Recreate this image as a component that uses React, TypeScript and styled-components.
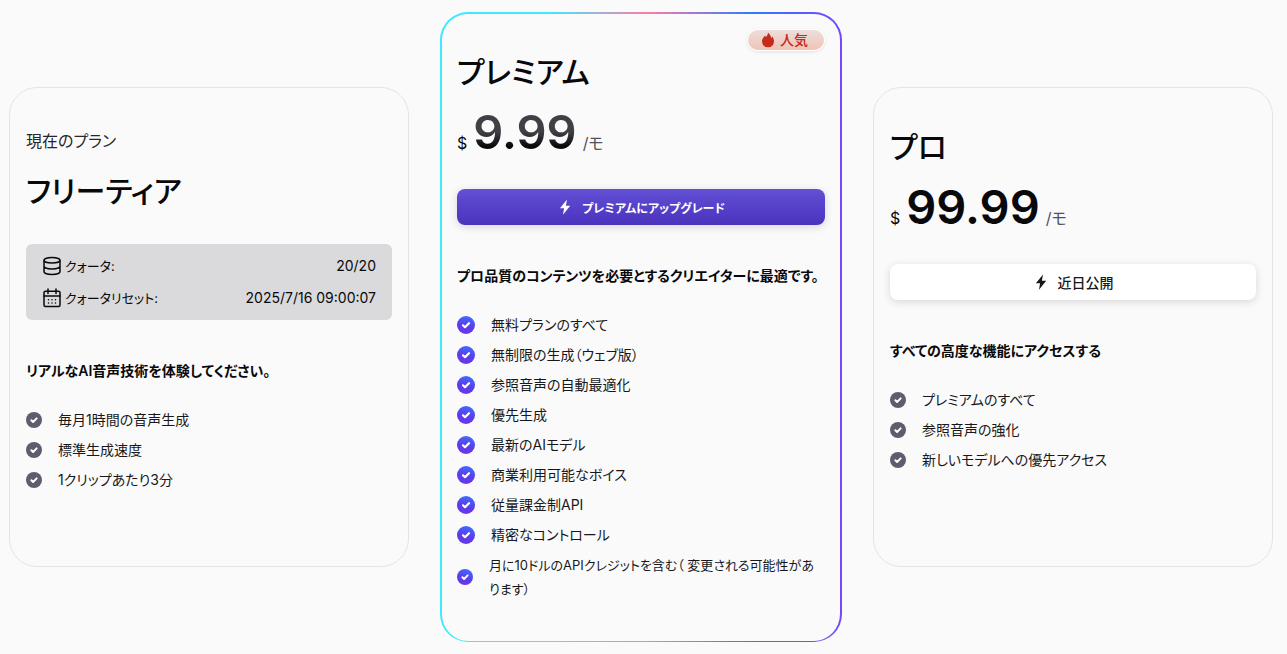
import React from "react";
import styled, { createGlobalStyle, css } from "styled-components";

const GlobalStyle = createGlobalStyle`
  * { box-sizing: border-box; }
  body {
    margin: 0;
    background: #fafafa;
    color: #09090b;
    font-family: Inter, "Noto Sans CJK JP", sans-serif;
    font-size: 14px;
    font-feature-settings: "palt";
  }
  h2, p, ul, dl, dd { margin: 0; padding: 0; }
`;

const Plans = styled.main`
  display: grid;
  grid-template-columns: repeat(auto-fit, minmax(360px, 1fr));
  align-items: center;
  gap: 32px;
  padding: 12px 14px 12px 9px;
`;

const Card = styled.section<{ $featured?: boolean }>`
  position: relative;
  display: flex;
  flex-direction: column;
  min-height: 480px;
  padding: 39px 16px;
  border: 1px solid #e4e4e7;
  border-radius: 28px;
  ${(p) =>
    p.$featured &&
    css`
      margin: 0 -1px;
      padding: 38px 15px 40px;
      border: solid transparent;
      border-width: 2px 2px 1px;
      background:
        linear-gradient(#fafafa, #fafafa) padding-box,
        linear-gradient(90deg, #40e8ff 27%, #ff7aa8 52%, #2f7bff 77%, #7647ff 100%) border-box;
    `}
`;

const Current = styled.p`
  margin-bottom: 16px;
  font-size: 16px;
  line-height: 28px;
  color: #27272a;
`;

const Title = styled.h2`
  font-size: 30px;
  line-height: 40px;
  font-weight: 500;
`;

const Price = styled.p`
  display: flex;
  align-items: baseline;
  gap: 6px;
  margin-top: 16px;
  font-size: 16px;
  line-height: 24px;
`;

const Amount = styled.span<{ $shaded?: boolean }>`
  font-size: 47px;
  line-height: 48px;
  font-weight: 600;
  ${(p) =>
    p.$shaded &&
    css`
      background: linear-gradient(#3f3f46 50%, #09090b 80%);
      background-clip: text;
      color: transparent;
    `}
`;

const Period = styled.span`
  color: #52525b;
`;

const Action = styled.button<{ $primary?: boolean }>`
  display: flex;
  align-items: center;
  justify-content: center;
  gap: 9px;
  height: 36px;
  margin-top: 33px;
  border: 0;
  border-radius: 8px;
  font: inherit;
  font-size: ${(p) => (p.$primary ? 12 : 14)}px;
  font-weight: ${(p) => (p.$primary ? 600 : 500)};
  font-feature-settings: inherit;
  color: ${(p) => (p.$primary ? "#fff" : "#18181b")};
  background: ${(p) => (p.$primary ? "linear-gradient(#6250d6, #4a32bd)" : "#fff")};
  box-shadow: 0 2px 8px rgba(0, 0, 0, 0.14);
`;

const Badge = styled.span`
  position: absolute;
  top: 16px;
  right: 16px;
  display: flex;
  align-items: center;
  gap: 5px;
  height: 20px;
  padding: 0 16px 0 13px;
  border-radius: 10px;
  font-weight: 500;
  line-height: 18px;
  color: #c62a1c;
  background: linear-gradient(#ebdfdc, #f1c3b5);
  box-shadow: 0 0 0 1px #fff, 0 1px 4px rgba(0, 0, 0, 0.16);
`;

const Usage = styled.dl`
  display: grid;
  gap: 8px;
  margin-top: 33px;
  padding: 10px 16px;
  border-radius: 6px;
  background: #dadadc;
`;

const UsageRow = styled.div`
  display: flex;
  align-items: center;
  justify-content: space-between;
  line-height: 24px;
`;

const UsageLabel = styled.dt`
  display: flex;
  align-items: center;
  gap: 3px;
  font-size: 13px;
`;

const Summary = styled.p`
  margin-top: 39px;
  font-size: 14px;
  line-height: 24px;
  font-weight: 600;
`;

const Features = styled.ul`
  display: grid;
  gap: 6px;
  margin-top: 25px;
  list-style: none;
`;

const Feature = styled.li<{ $long?: boolean }>`
  display: flex;
  align-items: center;
  gap: 16px;
  padding-right: 6px;
  font-size: ${(p) => (p.$long ? 13 : 14)}px;
  line-height: 24px;
  color: #18181b;

  svg { flex: none; }
`;

const Check = ({ bright, size }: { bright?: boolean; size: number }) => (
  <svg width={size} height={size} viewBox="0 0 18 18" aria-hidden="true">
    <defs>
      <linearGradient id="tick" x1="0.7" y1="0" x2="0.4" y2="1">
        <stop stopColor="#3f6dff" />
        <stop offset="0.6" stopColor="#5b3be8" />
        <stop offset="1" stopColor="#6a38ee" />
      </linearGradient>
    </defs>
    <circle cx="9" cy="9" r="9" fill={bright ? "url(#tick)" : "#5f5d6d"} />
    <path d="M6 9.300 8 11.200 12 7.200" fill="none" stroke="#fff" strokeWidth="2.200" strokeLinecap="round" strokeLinejoin="round" />
  </svg>
);

const Bolt = () => (
  <svg width="16" height="16" viewBox="0 0 16 16" fill="currentColor" aria-hidden="true">
    <path d="M10 .5 2.900 9.200h4.200L6 15.800 13.200 6.800H8.900z" />
  </svg>
);

const Flame = () => (
  <svg width="14" height="16" viewBox="0 0 14 16" fill="currentColor" aria-hidden="true">
    <path d="M6.900.6c.2 2-1 3.400-1.900 4.600-.4-.5-.6-1-.7-1.600C2.400 5.200 1 7.200 1 9.600A6 5.700 0 0 0 13 9.600c0-2-.7-3.800-1.800-5.400-.1.800-.4 1.500-1 2C9.900 4 8.600 2 6.900.6z" />
  </svg>
);

const Database = () => (
  <svg width="20" height="20" viewBox="0 0 20 20" fill="none" stroke="currentColor" strokeWidth="1.500" aria-hidden="true">
    <ellipse cx="10" cy="4.300" rx="8" ry="2.800" />
    <path d="M2 4.300v11.200c0 1.700 3.600 3 8 3s8-1.300 8-3V4.300M2 10c0 1.700 3.600 3 8 3s8-1.300 8-3" />
  </svg>
);

const Calendar = () => (
  <svg width="20" height="20" viewBox="0 0 20 20" fill="none" stroke="currentColor" strokeWidth="1.500" strokeLinecap="round" aria-hidden="true">
    <rect x="2" y="3.200" width="16" height="15.300" rx="1.500" />
    <path d="M2 8h16M6 1v4.500M14 1v4.500" />
    <path d="M6.500 11.800h.01M10 11.800h.01M13.500 11.800h.01M6.500 15h.01M10 15h.01M13.500 15h.01" />
  </svg>
);

const FeatureList = ({ items, bright }: { items: string[]; bright?: boolean }) => (
  <Features>
    {items.map((item) => {
      const long = item.length > 24;
      return (
        <Feature key={item} $long={long}>
          <Check bright={bright} size={bright && !long ? 18 : 16} />
          <span>{item}</span>
        </Feature>
      );
    })}
  </Features>
);

const premium = [
  "無料プランのすべて",
  "無制限の生成（ウェブ版）",
  "参照音声の自動最適化",
  "優先生成",
  "最新のAIモデル",
  "商業利用可能なボイス",
  "従量課金制API",
  "精密なコントロール",
  "月に10ドルのAPIクレジットを含む（ 変更される可能性があります）",
];

export default function App() {
  return (
    <>
      <GlobalStyle />
      <Plans lang="ja">
        <Card>
          <Current>現在のプラン</Current>
          <Title>フリーティア</Title>
          <Usage>
            <UsageRow>
              <UsageLabel><Database />クォータ:</UsageLabel>
              <dd>20/20</dd>
            </UsageRow>
            <UsageRow>
              <UsageLabel><Calendar />クォータリセット:</UsageLabel>
              <dd>2025/7/16 09:00:07</dd>
            </UsageRow>
          </Usage>
          <Summary>リアルなAI音声技術を体験してください。</Summary>
          <FeatureList items={["毎月1時間の音声生成", "標準生成速度", "1クリップあたり3分"]} />
        </Card>

        <Card $featured>
          <Badge><Flame />人気</Badge>
          <Title>プレミアム</Title>
          <Price>$<Amount $shaded>9.99</Amount><Period>/モ</Period></Price>
          <Action type="button" $primary><Bolt />プレミアムにアップグレード</Action>
          <Summary>プロ品質のコンテンツを必要とするクリエイターに最適です。</Summary>
          <FeatureList items={premium} bright />
        </Card>

        <Card>
          <Title>プロ</Title>
          <Price>$<Amount>99.99</Amount><Period>/モ</Period></Price>
          <Action type="button"><Bolt />近日公開</Action>
          <Summary>すべての高度な機能にアクセスする</Summary>
          <FeatureList items={["プレミアムのすべて", "参照音声の強化", "新しいモデルへの優先アクセス"]} />
        </Card>
      </Plans>
    </>
  );
}
